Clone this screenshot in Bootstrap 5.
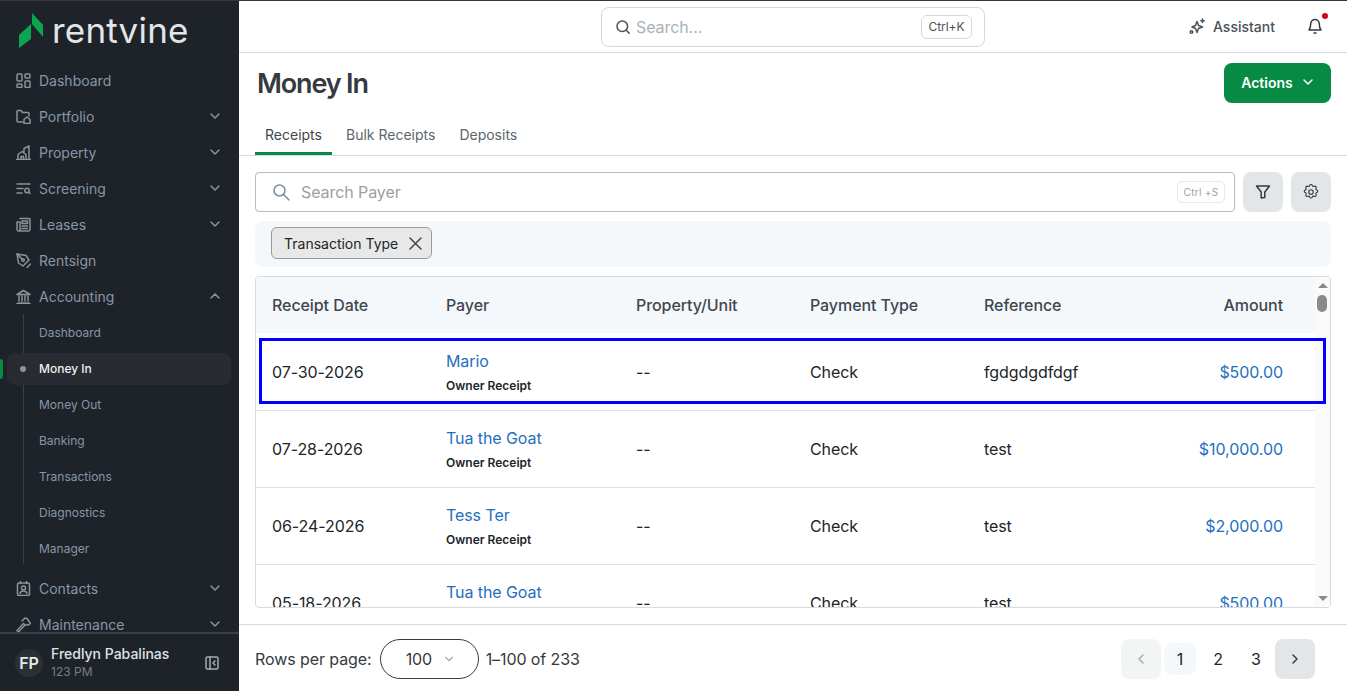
<!DOCTYPE html>
<html lang="en">
<head>
<meta charset="utf-8">
<title>Money In</title>
<link href="https://cdn.jsdelivr.net/npm/bootstrap@5.3.0/dist/css/bootstrap.min.css" rel="stylesheet">
<script src="https://cdn.jsdelivr.net/npm/bootstrap@5.3.0/dist/js/bootstrap.bundle.min.js"></script>
<style>
html,body{height:100%;overflow:hidden}
body{font-family:Inter,"Liberation Sans",sans-serif;color:#212529;background:#fff;font-size:16px;letter-spacing:-.08px}
svg{display:block;flex:none}
.ic{fill:none;stroke:currentColor;stroke-width:1.5;stroke-linecap:round;stroke-linejoin:round}
.topstrip{height:1px;background:#3c343a;flex:none}
.shell{height:690px}
.side{width:239px;background:#1e2329;color:#8796a8;flex:none;letter-spacing:0}
.logo-row{height:52px;padding:8px 0 0 19px;gap:8px;flex:none}
.logo-text{font-size:35px;line-height:44px;color:#e3e5e8;font-weight:400;letter-spacing:.2px;margin-top:-3px}
.side-nav{flex:1 1 0;min-height:0;overflow:hidden;padding-top:9px;font-size:14px}
.nav-i{height:36px;padding:0 18px 0 16px;gap:8px;color:#8796a8}
.nav-i .ic{color:#8d939b}
.nav-i .chev{margin-left:auto;color:#8d939b}
.sub-wrap{position:relative;padding-bottom:3px;margin-top:1px}
.sub-line{position:absolute;left:23px;top:-1px;bottom:6px;width:1px;background:#3a4047}
.sub-i{height:36px;padding-left:39px;font-size:12px;color:#8796a8;position:relative}
.sub-on{color:#eef0f2;font-weight:500}
.sub-on::before{content:"";position:absolute;left:7px;right:8px;top:2px;bottom:2px;background:#282c32;border-radius:8px}
.sub-on::after{content:"";position:absolute;left:20px;top:15px;width:6px;height:6px;border-radius:50%;background:#8d939b}
.sub-on span{position:relative;z-index:1}
.pin{position:absolute;left:0;top:8px;width:3px;height:20px;background:#068a44;border-radius:0 3px 3px 0;z-index:1}
.side-foot{height:59px;border-top:2px solid #3a3f45;padding:0 20px 0 15px;flex:none;background:#1e2329}
.ava{width:28px;height:28px;border-radius:50%;background:#2b3035;color:#e6e8ea;font-size:16px;font-weight:600}
.foot-name{font-size:14px;line-height:18px;color:#dfe2e5;font-weight:500}
.foot-sub{font-size:12px;line-height:16px;color:#767d85;margin-top:1px}
.main{min-width:0}
.topbar{height:52px;border-bottom:1px solid #d8dadc;flex:none;position:relative}
.gsearch{width:384px;height:40px;border:1px solid #d5d8db;border-radius:8px;padding:0 12px 0 13px;margin-left:362px;gap:5px;color:#a9b1b6}
.gsearch .ic{color:#495057}
.kb{margin-left:auto;height:24px;width:51px;border:1px solid #d5d8db;border-radius:6px;font-size:12px;color:#495057}
.assist{font-size:14px;font-weight:500;color:#495057;gap:7px;margin-left:204px;letter-spacing:0}
.bell{margin-left:32px;position:relative;color:#343a40}
.bell-dot{position:absolute;right:-5px;top:-5px;width:6px;height:6px;background:#d0021b;border-radius:50%}
.title-row{height:62px;padding:0 16px 0 18px;flex:none}
.pg-title{font-size:27px;font-weight:600;letter-spacing:-1.15px;color:#343a40;margin:0;line-height:1.2}
.act{background:#068a44;color:#fff;width:107px;height:40px;border-radius:8px;border:0;font-size:14px;font-weight:600;gap:9px;margin-top:-2px;padding:0 0 2px;letter-spacing:0}
.act:hover{background:#068a44;color:#fff}
.tabs{height:41px;border-bottom:1px solid #d8dadc;padding-left:16px;flex:none}
.tab-i{padding:0 10px;font-size:14px;color:#5c656c;line-height:40px;height:40px;margin-right:4px;text-decoration:none;letter-spacing:0}
.tab-on{color:#3f474e;border-bottom:3px solid #068a44;width:77px;margin-right:4px}
.tool-row{padding:16px 16px 0 16px;gap:8px;flex:none}
.psearch{height:40px;border:1px solid #b9bcbe;border-radius:4px;padding:0 9px 0 16px;gap:10px;color:#9aa0a5;font-size:16px}
.psearch .ic{color:#7d8d99}
.kb2{margin-left:auto;height:22px;width:48px;border:1px solid #e6e8ea;border-radius:5px;font-size:10px;color:#9aa3a9;letter-spacing:.3px}
.sq{width:40px;height:40px;background:#e3e6e7;border-radius:8px;border:0;color:#343a40;padding:0}
.chip-panel{margin:9px 16px 0 16px;height:46px;background:#f5f8fb;border-radius:8px;padding:6px 16px;flex:none}
.fchip{height:32px;width:161px;background:#e8e8e8;border:1px solid #999;border-radius:6px;font-size:14px;padding:0 9px 0 12px;color:#212529;gap:10px;letter-spacing:0}
.fchip .ic{color:#444}
.tbl-box{margin:9px 16px 0 16px;height:332px;border:1px solid #d8dadc;border-radius:4px;flex:none;overflow:hidden;position:relative}
.tbl-view{flex:1 1 0;min-width:0;overflow:hidden}
.tbl-view .table{margin:0;table-layout:fixed;width:1059px;--bs-table-bg:transparent;font-size:16px}
.tbl-view th{height:56px;background:#f5f8fb;font-weight:500;font-size:16px;color:#3f474e;vertical-align:middle;border:0;padding:0 0 0 16px}
.tbl-view td{height:77px;vertical-align:middle;padding:0 0 0 16px;border-bottom:1px solid #dee2e6;color:#212529}
.tbl-view tbody tr:first-child td{padding-top:2px}
.tbl-view td.amt,.tbl-view th.amt{text-align:right;padding-right:32px;padding-left:0}
.lnk{color:#1f6fc0;text-decoration:none;display:block;line-height:24px}
.amt .lnk{display:inline}
.subt{font-size:12px;font-weight:600;line-height:14px;margin-top:6px;margin-bottom:2px;color:#212529;letter-spacing:0}
.sbar{width:15px;background:#fafafa;flex:none;position:relative}
.sb-up,.sb-dn{position:absolute;left:3px;width:0;height:0;border-left:5px solid transparent;border-right:5px solid transparent}
.sb-up{top:6px;border-bottom:5px solid #8a8a8a}
.sb-dn{bottom:6px;border-top:5px solid #8a8a8a}
.sb-th{position:absolute;left:2px;width:10px;top:18px;height:17px;background:#8a8a8a;border-radius:5px}
.hilite{position:absolute;left:3px;right:4px;top:61px;height:66px;border:3px solid #0000ff;pointer-events:none}
.pager-row{margin-top:16px;border-top:1px solid #d8dadc;padding:14px 32px 0 16px;flex:none;font-size:16px;color:#343a40}
.rsel{width:99px;height:40px;border:1px solid #343a40;border-radius:20px;margin:0 7px 0 8px;padding-left:25px;gap:12px}
.pgb{width:40px;height:40px;border-radius:8px;background:#e3e6e7;color:#343a40}
.pgb-off{background:#f3f5f5;color:#a6acb1}
.pgn{width:32px;height:32px;border-radius:8px;color:#212529;margin:0 3px}
.pgn-on{background:#f5f8fb}
</style>
</head>
<body class="d-flex flex-column">
<div class="topstrip"></div>
<div class="shell d-flex">
  <aside class="side d-flex flex-column">
    <div class="logo-row d-flex align-items-center">
      <svg width="25" height="36" viewBox="0 0 25 36" aria-hidden="true"><path fill="#0aa550" d="M0 22 12 11V26L0 35Z"/><path fill="#0aa550" d="M13 0 24 12V24L13 11Z"/></svg>
      <span class="logo-text">rentvine</span>
    </div>
    <nav class="side-nav">
      <div class="nav-i d-flex align-items-center"><svg class="ic" width="15" height="15" viewBox="0 0 15 15" stroke-width="1.2"><rect x="1" y="1" width="5" height="7" rx="1"/><rect x="9" y="1" width="5" height="4" rx="1"/><rect x="1" y="11" width="5" height="3.5" rx="1"/><rect x="9" y="8" width="5" height="6.5" rx="1"/></svg><span>Dashboard</span></div>
      <div class="nav-i d-flex align-items-center"><svg class="ic" width="15" height="15" viewBox="0 0 15 15" stroke-width="1.2"><path d="M6.5 13H2a1 1 0 0 1-1-1V2.500a1 1 0 0 1 1-1h3l1.500 2H12a1 1 0 0 1 1 1v2.500"/><path d="M8 14.500V10.500L11 8l3 2.500v4Z"/></svg><span>Portfolio</span><svg class="ic chev" width="12" height="12" viewBox="0 0 12 12"><path d="M2 4l4 4 4-4"/></svg></div>
      <div class="nav-i d-flex align-items-center"><svg class="ic" width="15" height="15" viewBox="0 0 15 15" stroke-width="1.1"><path d="M.5 14.500h14M13 14.500V1L8 3.500v3M2 14.500V9.500l4-3 4 3v5M5 14.500v-3h2.500v3"/></svg><span>Property</span><svg class="ic chev" width="12" height="12" viewBox="0 0 12 12"><path d="M2 4l4 4 4-4"/></svg></div>
      <div class="nav-i d-flex align-items-center"><svg class="ic" width="15" height="15" viewBox="0 0 15 15" stroke-width="1.2"><path d="M1 3h13M1 7.500h6M1 12h5"/><circle cx="11" cy="9.500" r="2.200"/><path d="M12.700 11.200 14 12.500"/></svg><span>Screening</span><svg class="ic chev" width="12" height="12" viewBox="0 0 12 12"><path d="M2 4l4 4 4-4"/></svg></div>
      <div class="nav-i d-flex align-items-center"><svg class="ic" width="15" height="15" viewBox="0 0 15 15" stroke-width="1.2"><path d="M4 1.500h9a1 1 0 0 1 1 1v10a1.500 1.500 0 0 1-1.500 1.500H2.500A1.500 1.500 0 0 1 1 12.500V5h3M4 5v7.500a1 1 0 0 1-1 1.500"/><rect x="6" y="4" width="5.500" height="2.500"/><path d="M6 9h5.500M6 11.500h5.500"/></svg><span>Leases</span><svg class="ic chev" width="12" height="12" viewBox="0 0 12 12"><path d="M2 4l4 4 4-4"/></svg></div>
      <div class="nav-i d-flex align-items-center"><svg class="ic" width="15" height="15" viewBox="0 0 15 15" stroke-width="1.2"><path d="M1 1l9 1.500 3 4.500-6 6-4.500-3Z"/><circle cx="7" cy="7" r="1.300"/><path d="M1 1l5 5M11 14.500l3.500-3.500"/></svg><span>Rentsign</span></div>
      <div class="nav-i d-flex align-items-center"><svg class="ic" width="15" height="15" viewBox="0 0 15 15" stroke-width="1.2"><path d="M1 5.500 7.500 1.500 14 5.500ZM2.500 14h10M1 14.500h13M3 7v5M6 7v5M9 7v5M12 7v5"/></svg><span>Accounting</span><svg class="ic chev" width="12" height="12" viewBox="0 0 12 12"><path d="M2 8l4-4 4 4"/></svg></div>
      <div class="sub-wrap">
        <div class="sub-line"></div>
        <div class="sub-i d-flex align-items-center"><span>Dashboard</span></div>
        <div class="sub-i sub-on d-flex align-items-center"><div class="pin"></div><span>Money In</span></div>
        <div class="sub-i d-flex align-items-center"><span>Money Out</span></div>
        <div class="sub-i d-flex align-items-center"><span>Banking</span></div>
        <div class="sub-i d-flex align-items-center"><span>Transactions</span></div>
        <div class="sub-i d-flex align-items-center"><span>Diagnostics</span></div>
        <div class="sub-i d-flex align-items-center"><span>Manager</span></div>
      </div>
      <div class="nav-i d-flex align-items-center"><svg class="ic" width="15" height="15" viewBox="0 0 15 15" stroke-width="1.2"><rect x="1.500" y="2" width="12" height="12.500" rx="1.500"/><path d="M4.500.5v2M10.500.5v2"/><circle cx="7.500" cy="7" r="2"/><path d="M4 12.500c.5-2 2-2.500 3.500-2.500s3 .5 3.500 2.500"/></svg><span>Contacts</span><svg class="ic chev" width="12" height="12" viewBox="0 0 12 12"><path d="M2 4l4 4 4-4"/></svg></div>
      <div class="nav-i d-flex align-items-center"><svg class="ic" width="15" height="15" viewBox="0 0 15 15" stroke-width="1.2"><path d="M1 13.500 2.500 15 9 8 7.500 6.500ZM6 4l3-3 2 .5 3.500 5-2 1.500L9 8"/></svg><span>Maintenance</span><svg class="ic chev" width="12" height="12" viewBox="0 0 12 12"><path d="M2 4l4 4 4-4"/></svg></div>
    </nav>
    <div class="side-foot d-flex align-items-center">
      <div class="ava d-flex align-items-center justify-content-center">FP</div>
      <div class="ms-2 flex-grow-1">
        <div class="foot-name">Fredlyn Pabalinas</div>
        <div class="foot-sub">123 PM</div>
      </div>
      <svg class="ic" style="color:#a8adb3" width="14" height="14" viewBox="0 0 14 14" stroke-width="1.3"><rect x="1" y="1" width="12" height="12" rx="1.500"/><path d="M5 1v12M10 5 8 7l2 2"/></svg>
    </div>
  </aside>
  <main class="main flex-grow-1 d-flex flex-column">
    <header class="topbar d-flex align-items-center">
      <div class="gsearch d-flex align-items-center">
        <svg class="ic" width="16" height="16" viewBox="0 0 16 16" stroke-width="1.3"><circle cx="7.300" cy="7.300" r="5.300"/><path d="m11.200 11.200 3 3"/></svg>
        <span>Search...</span>
        <span class="kb d-flex align-items-center justify-content-center">Ctrl+K</span>
      </div>
      <div class="assist d-flex align-items-center">
        <svg class="ic" width="17" height="17" viewBox="0 0 17 17" stroke-width="1.300"><path d="M8 3.500 9.500 7.500 13.500 9 9.500 10.500 8 14.500 6.500 10.500 3 9 6.500 7.500Z"/><path d="M13.500 1v3.500M11.800 2.700h3.400"/><circle cx="2.500" cy="14" r="1.300"/></svg>
        <span>Assistant</span>
      </div>
      <div class="bell">
        <svg class="ic" width="16" height="17" viewBox="0 0 16 17" stroke-width="1.200"><path d="M8 1.500a4.300 4.300 0 0 0-4.300 4.300c0 4.200-1.700 6.200-1.700 6.200h12s-1.700-2-1.700-6.200A4.300 4.300 0 0 0 8 1.500Z"/><path d="M7 15h2"/></svg>
        <span class="bell-dot"></span>
      </div>
    </header>
    <div class="title-row d-flex align-items-center justify-content-between">
      <h1 class="pg-title">Money In</h1>
      <button class="btn act d-flex align-items-center justify-content-center" type="button"><span>Actions</span><svg class="ic" width="12" height="12" viewBox="0 0 12 12"><path d="M2 4l4 4 4-4"/></svg></button>
    </div>
    <div class="tabs d-flex">
      <a class="tab-i tab-on" href="#">Receipts</a>
      <a class="tab-i" href="#">Bulk Receipts</a>
      <a class="tab-i" href="#">Deposits</a>
    </div>
    <div class="tool-row d-flex">
      <div class="psearch flex-grow-1 d-flex align-items-center">
        <svg class="ic" width="19" height="19" viewBox="0 0 19 19" stroke-width="1.200"><circle cx="7.500" cy="7.500" r="5.500"/><path d="m11.500 11.500 5.500 5.500"/></svg>
        <span>Search Payer</span>
        <span class="kb2 d-flex align-items-center justify-content-center">Ctrl +S</span>
      </div>
      <button class="sq d-flex align-items-center justify-content-center" type="button" aria-label="Filter"><svg class="ic" width="16" height="16" viewBox="0 0 16 16" stroke-width="1.300"><path d="M1.500 2h13L9.800 8v5.500L6.200 14V8Z"/></svg></button>
      <button class="sq d-flex align-items-center justify-content-center" type="button" aria-label="Settings"><svg class="ic" width="18" height="18" viewBox="0 0 24 24" stroke-width="1.800"><path d="M10.300 3.300c.4-1.800 3-1.800 3.400 0a1.700 1.700 0 0 0 2.600 1.100c1.500-.9 3.300.8 2.400 2.400a1.700 1.700 0 0 0 1 2.500c1.800.4 1.800 3 0 3.400a1.700 1.700 0 0 0-1 2.600c.9 1.500-.9 3.300-2.400 2.400a1.700 1.700 0 0 0-2.600 1c-.4 1.800-3 1.800-3.400 0a1.700 1.700 0 0 0-2.600-1c-1.500.9-3.300-.9-2.400-2.400a1.700 1.700 0 0 0-1-2.600c-1.800-.4-1.800-3 0-3.400a1.700 1.700 0 0 0 1-2.500c-.9-1.600.9-3.300 2.400-2.400a1.700 1.700 0 0 0 2.600-1.100Z"/><circle cx="12" cy="12" r="3"/></svg></button>
    </div>
    <div class="chip-panel">
      <div class="fchip d-flex align-items-center justify-content-between"><span>Transaction Type</span><svg class="ic" width="13" height="13" viewBox="0 0 13 13" stroke-width=".9"><path d="m1 1 11 11M12 1 1 12"/></svg></div>
    </div>
    <div class="tbl-box d-flex">
      <div class="tbl-view">
        <table class="table">
          <colgroup><col style="width:174px"><col style="width:190px"><col style="width:174px"><col style="width:174px"><col style="width:174px"><col></colgroup>
          <thead><tr><th>Receipt Date</th><th>Payer</th><th>Property/Unit</th><th>Payment Type</th><th>Reference</th><th class="amt">Amount</th></tr></thead>
          <tbody>
            <tr><td>07-30-2026</td><td><a class="lnk" href="#">Mario</a><div class="subt">Owner Receipt</div></td><td>--</td><td>Check</td><td>fgdgdgdfdgf</td><td class="amt"><a class="lnk" href="#">$500.00</a></td></tr>
            <tr><td>07-28-2026</td><td><a class="lnk" href="#">Tua the Goat</a><div class="subt">Owner Receipt</div></td><td>--</td><td>Check</td><td>test</td><td class="amt"><a class="lnk" href="#">$10,000.00</a></td></tr>
            <tr><td>06-24-2026</td><td><a class="lnk" href="#">Tess Ter</a><div class="subt">Owner Receipt</div></td><td>--</td><td>Check</td><td>test</td><td class="amt"><a class="lnk" href="#">$2,000.00</a></td></tr>
            <tr><td>05-18-2026</td><td><a class="lnk" href="#">Tua the Goat</a><div class="subt">Owner Receipt</div></td><td>--</td><td>Check</td><td>test</td><td class="amt"><a class="lnk" href="#">$500.00</a></td></tr>
          </tbody>
        </table>
      </div>
      <div class="sbar"><span class="sb-up"></span><span class="sb-th"></span><span class="sb-dn"></span></div>
      <div class="hilite"></div>
    </div>
    <div class="pager-row d-flex align-items-center">
      <span>Rows per page:</span>
      <div class="rsel d-flex align-items-center"><span>100</span><svg class="ic" style="color:#9aa0a5" width="10" height="10" viewBox="0 0 12 12"><path d="M2 4l4 4 4-4"/></svg></div>
      <span>1–100 of 233</span>
      <div class="ms-auto d-flex align-items-center">
        <div class="pgb pgb-off d-flex align-items-center justify-content-center"><svg class="ic" width="12" height="12" viewBox="0 0 12 12"><path d="M8 2 4 6l4 4"/></svg></div>
        <div class="pgn pgn-on d-flex align-items-center justify-content-center">1</div>
        <div class="pgn d-flex align-items-center justify-content-center">2</div>
        <div class="pgn d-flex align-items-center justify-content-center">3</div>
        <div class="pgb d-flex align-items-center justify-content-center"><svg class="ic" width="12" height="12" viewBox="0 0 12 12"><path d="m4 2 4 4-4 4"/></svg></div>
      </div>
    </div>
  </main>
</div>
</body>
</html>
